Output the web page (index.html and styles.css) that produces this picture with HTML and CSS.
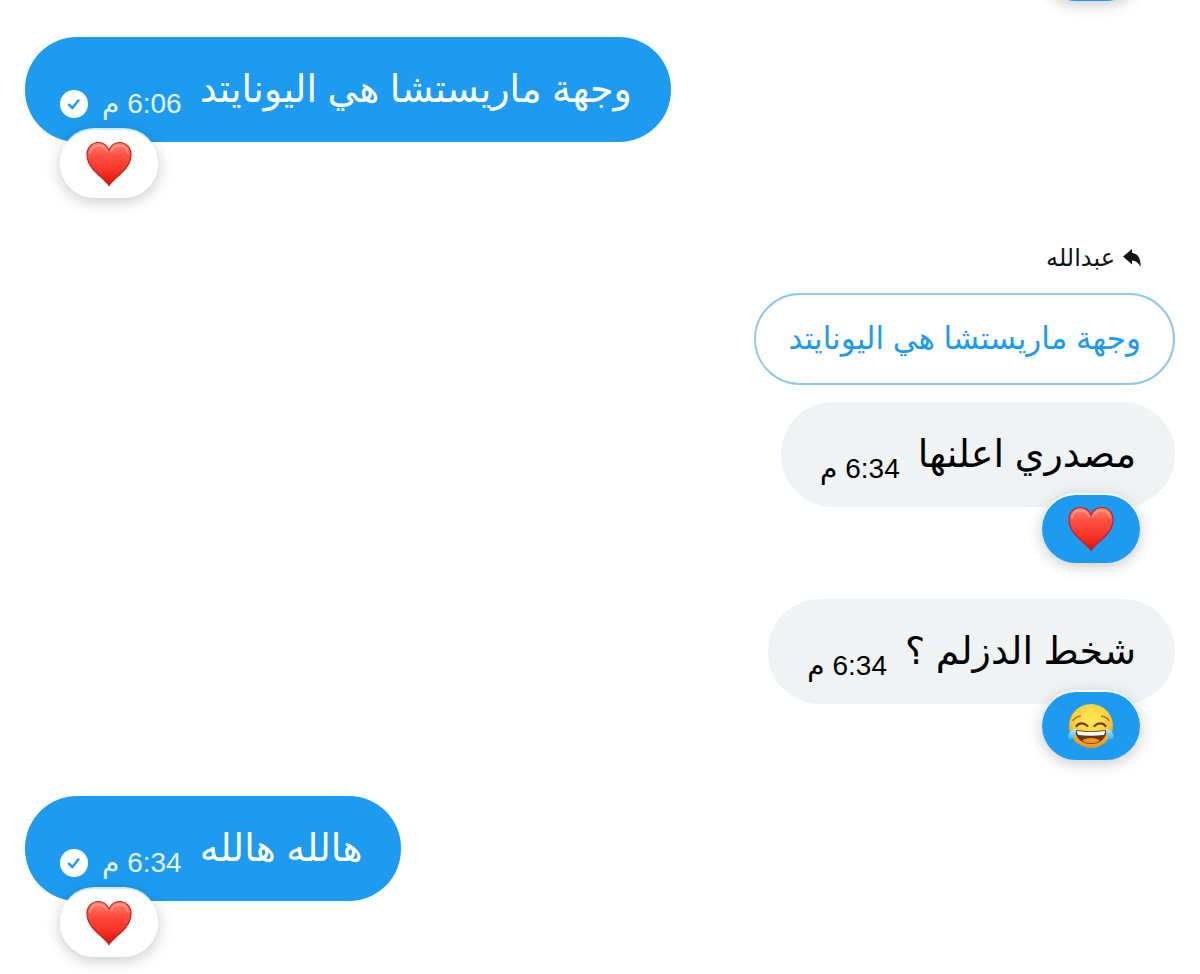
FILE: index.html
```html
<!DOCTYPE html>
<html lang="ar" dir="rtl">
<head>
<meta charset="utf-8">
<meta name="viewport" content="width=device-width, initial-scale=1">
<title>محادثة</title>
<link rel="stylesheet" href="styles.css">
</head>
<body>
<svg class="defs" aria-hidden="true">
  <defs>
    <linearGradient id="heart-fill" x1="0" y1="0" x2="0" y2="1">
      <stop offset="0" stop-color="#ff8573"/>
      <stop offset="0.3" stop-color="#fb5143"/>
      <stop offset="0.65" stop-color="#fa3428"/>
      <stop offset="1" stop-color="#d3150f"/>
    </linearGradient>
    <radialGradient id="face-fill" cx="0.5" cy="0.35" r="0.65">
      <stop offset="0" stop-color="#ffe95a"/>
      <stop offset="0.6" stop-color="#ffd03a"/>
      <stop offset="1" stop-color="#ee8f16"/>
    </radialGradient>
    <linearGradient id="tear-fill" x1="0" y1="0" x2="0" y2="1">
      <stop offset="0" stop-color="#b5efff"/>
      <stop offset="1" stop-color="#35b3ee"/>
    </linearGradient>
    <symbol id="heart" viewBox="0 0 46 46">
      <path d="M23 44.500C21 41 11 33 6 27C2.500 22.500 1 18 1 13.500C1 6.500 6 1.500 12.300 1.500C17 1.500 21 4.300 23 9C25 4.300 29 1.500 33.700 1.500C40 1.500 45 6.500 45 13.500C45 18 43.500 22.500 40 27C35 33 25 41 23 44.500Z" fill="url(#heart-fill)" stroke="#c5211b" stroke-width="1.200"/>
      <path d="M4 12C5 7 8 4.500 12.500 4.500C17 4.500 19.500 7 21 10.500" fill="none" stroke="#ffb2a6" stroke-width="2" stroke-linecap="round" opacity="0.500"/>
      <path d="M25 10.500C26.500 7 29.500 4.500 33.500 4.500C38 4.500 41 7 42 12" fill="none" stroke="#ffb2a6" stroke-width="2" stroke-linecap="round" opacity="0.500"/>
    </symbol>
    <symbol id="joy" viewBox="0 0 46 46">
      <circle cx="23" cy="23" r="22" fill="url(#face-fill)"/>
      <path d="M5 17.500C7 14.500 9.500 13.500 12.500 13.200M41 17.500C39 14.500 36.500 13.500 33.500 13.200" fill="none" stroke="#a56612" stroke-width="1.300" stroke-linecap="round"/>
      <path d="M8.500 23C11 19.500 16 19.500 19.500 23M26.500 23C30 19.500 35 19.500 37.500 23" fill="none" stroke="#6b3a0d" stroke-width="2.200" stroke-linecap="round"/>
      <path d="M7.500 27C18 28.500 28 28.500 38.500 27C39 35 32 41 23 41C14 41 7 35 7.500 27Z" fill="#6a3510"/>
      <path d="M9 28C18.500 29.400 27.500 29.400 37 28C37 30 36.500 31.500 35.500 32C27 33 19 33 10.500 32C9.500 31.500 9 30 9 28Z" fill="#fff"/>
      <path d="M14 37.500C18 34 28 34 32 37.500C27 41.300 19 41.300 14 37.500Z" fill="#ee9a1c"/>
      <path d="M8.500 26C5 26 1 29 0.300 32.500C-0.300 36 4 37.500 6 34.500C7.800 32 8 28.500 8.500 26Z" fill="url(#tear-fill)"/>
      <path d="M37.500 26C41 26 45 29 45.700 32.500C46.300 36 42 37.500 40 34.500C38.200 32 38 28.500 37.500 26Z" fill="url(#tear-fill)"/>
    </symbol>
    <symbol id="sent" viewBox="0 0 28 28">
      <circle cx="14" cy="14" r="14" fill="#fff"/>
      <path d="M8.300 14.200L12.300 18L19 9.800" fill="none" stroke="#1d9bf0" stroke-width="2.500"/>
    </symbol>
  </defs>
</svg>

<main class="chat">
  <div class="message received earlier">
    <button class="reaction" type="button" aria-label="تفاعل"></button>
  </div>

  <article class="message sent">
    <div class="bubble">
      <p class="text">وجهة ماريستشا هي اليونايتد</p>
      <time class="time">6:06 م</time>
      <svg class="status" role="img" aria-label="تم الإرسال"><use href="#sent"/></svg>
    </div>
    <button class="reaction" type="button" aria-label="قلب"><svg class="emoji"><use href="#heart"/></svg></button>
  </article>

  <article class="message received">
    <header class="reply-to">
      <svg class="reply-icon" viewBox="0 0 18 18" aria-hidden="true"><path d="M0 7.500L9 0V4C15 4.500 18 9.500 17.500 18C15.500 14 13 11.800 9 11.500V15.500Z" fill="#0f1419"/></svg>
      <span>عبدالله</span>
    </header>
    <blockquote class="quote">وجهة ماريستشا هي اليونايتد</blockquote>
    <div class="bubble">
      <p class="text">مصدري اعلنها</p>
      <time class="time">6:34 م</time>
    </div>
    <button class="reaction" type="button" aria-label="قلب"><svg class="emoji"><use href="#heart"/></svg></button>
  </article>

  <article class="message received">
    <div class="bubble">
      <p class="text">شخط الدزلم ؟</p>
      <time class="time">6:34 م</time>
    </div>
    <button class="reaction" type="button" aria-label="دموع الفرح"><svg class="emoji"><use href="#joy"/></svg></button>
  </article>

  <article class="message sent">
    <div class="bubble">
      <p class="text">هالله هالله</p>
      <time class="time">6:34 م</time>
      <svg class="status" role="img" aria-label="تم الإرسال"><use href="#sent"/></svg>
    </div>
    <button class="reaction" type="button" aria-label="قلب"><svg class="emoji"><use href="#heart"/></svg></button>
  </article>
</main>
</body>
</html>
```
FILE: styles.css
```css
* {
  box-sizing: border-box;
}

body {
  margin: 0;
  background: #fff;
  color: #0f1419;
  font-family: "Liberation Sans", "DejaVu Sans", sans-serif;
}

.defs {
  position: absolute;
  width: 0;
  height: 0;
}

.chat {
  display: flex;
  flex-direction: column;
  gap: 36px;
  padding: 0 25px 16px;
  overflow: hidden;
}

.message {
  display: flex;
  flex-direction: column;
  align-items: flex-start;
}

.message.sent {
  align-items: flex-end;
}

.message.earlier {
  margin-top: -55px;
}

.bubble {
  display: flex;
  align-items: flex-end;
  padding: 24px 39px;
  border-radius: 52px;
  background: #eff3f4;
  color: #000;
}

.sent .bubble {
  padding-left: 35px;
  background: #1d9bf0;
  color: #fff;
}

.text {
  margin: 0 0 0 18px;
  font-size: 38px;
  line-height: 57px;
}

.time {
  font-size: 28px;
  line-height: 28px;
}

.sent .time {
  color: #e4f3fd;
}

.status {
  width: 28px;
  height: 28px;
  margin-right: 14px;
}

.reaction {
  display: flex;
  align-items: center;
  justify-content: center;
  width: 98px;
  height: 68px;
  margin: -12px 35px 0;
  padding: 0;
  border: 0;
  border-radius: 34px;
  background: #1d9bf0;
  box-shadow: 0 -2px 0 rgba(255, 255, 255, 0.8), 0 3px 16px rgba(0, 0, 0, 0.22);
}

.sent .reaction {
  background: #fff;
}

.emoji {
  width: 46px;
  height: 46px;
}

.reply-to {
  display: flex;
  align-items: center;
  gap: 8px;
  padding: 6px 34px 17px;
  font-size: 24px;
  line-height: 36px;
}

.reply-icon {
  width: 18px;
  height: 18px;
}

.quote {
  margin: 0 0 17px;
  padding: 21px 32px;
  border: 2px solid #8ec8f3;
  border-radius: 46px;
  color: #1d9bf0;
  font-size: 31px;
  line-height: 46px;
}
```
